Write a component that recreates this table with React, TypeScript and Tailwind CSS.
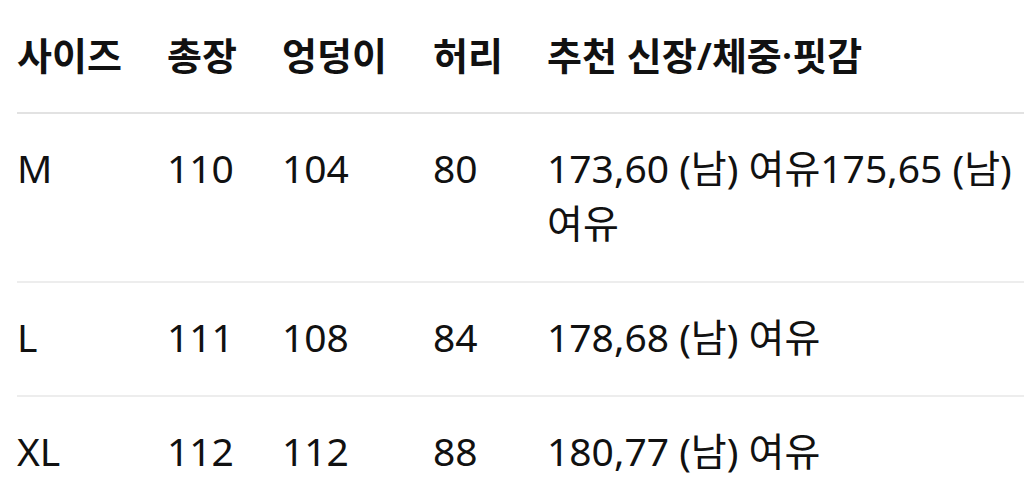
import React from 'react';

const ROWS = [
  { size: 'M', length: '110', hip: '104', waist: '80', fit: '173,60 (남) 여유175,65 (남) 여유' },
  { size: 'L', length: '111', hip: '108', waist: '84', fit: '178,68 (남) 여유' },
  { size: 'XL', length: '112', hip: '112', waist: '88', fit: '180,77 (남) 여유' },
];

export default function App() {
  return (
    <div
      className="w-[1024px] h-[501px] overflow-hidden bg-white text-[#111111]"
      style={{ fontFamily: '"Noto Sans", "Noto Sans CJK KR", sans-serif' }}
    >
      <table className="ml-[17px] w-[1060px] table-fixed border-collapse text-left leading-[55px] break-keep">
        <colgroup>
          <col className="w-[150px]" />
          <col className="w-[115px]" />
          <col className="w-[151px]" />
          <col className="w-[114px]" />
          <col />
        </colgroup>
        <thead>
          <tr className="border-b-2 border-[#e2e2e2] text-[38px]">
            <th className="pt-[28px] pb-[29px] font-semibold">사이즈</th>
            <th className="pt-[28px] pb-[29px] font-semibold">총장</th>
            <th className="pt-[28px] pb-[29px] font-semibold">엉덩이</th>
            <th className="pt-[28px] pb-[29px] font-semibold">허리</th>
            <th className="pt-[28px] pb-[29px] font-semibold">추천 신장/체중·핏감</th>
          </tr>
        </thead>
        <tbody className="text-[39px]">
          {ROWS.map((r) => (
            <tr key={r.size} className="border-b-2 border-[#ededed]">
              <td className="pt-[26px] pb-[31px] align-top">{r.size}</td>
              <td className="pt-[26px] pb-[31px] align-top">{r.length}</td>
              <td className="pt-[26px] pb-[31px] align-top">{r.hip}</td>
              <td className="pt-[26px] pb-[31px] align-top">{r.waist}</td>
              <td className="pt-[26px] pb-[31px] pr-[20px] align-top">{r.fit}</td>
            </tr>
          ))}
        </tbody>
      </table>
    </div>
  );
}
